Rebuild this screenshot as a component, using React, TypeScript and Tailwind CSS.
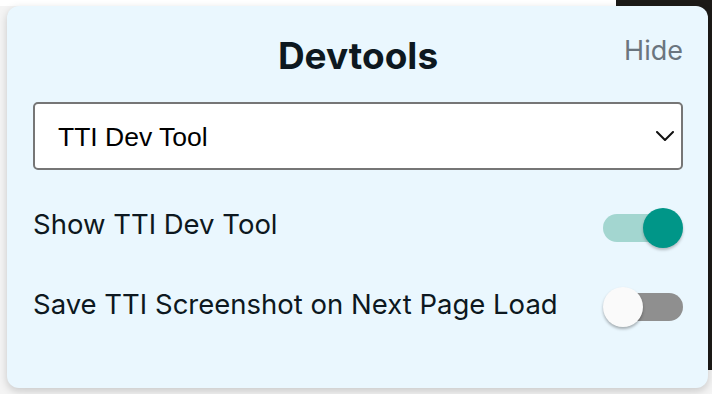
function Toggle({ on }: { on: boolean }) {
  return (
    <div className="relative h-[40px] w-[80px] shrink-0">
      <div
        className={
          on
            ? "absolute left-[0px] top-[6px] h-[28px] w-[76px] rounded-full bg-[#a3d6d0]"
            : "absolute left-[4px] top-[6px] h-[28px] w-[76px] rounded-full bg-[#8f8f8f]"
        }
      />
      <div
        className={
          on
            ? "absolute right-0 top-0 h-[40px] w-[40px] rounded-full bg-[#009688] shadow-[0_2px_3px_rgba(0,0,0,0.25)]"
            : "absolute left-0 top-0 h-[40px] w-[40px] rounded-full bg-[#fafafa] shadow-[0_2px_3px_rgba(0,0,0,0.3)]"
        }
      />
    </div>
  );
}

export default function App() {
  return (
    <div className="relative h-[394px] w-[712px] overflow-hidden bg-[#f4f4f4] font-['Inter',sans-serif]">
      <div className="absolute right-0 top-0 h-[370px] w-[96px] bg-[#1c1a17]" />
      <div className="absolute left-0 top-0 h-[6px] w-[616px] bg-white" />
      <div className="relative ml-[7px] mt-[6px] h-[382px] w-[701px] rounded-[12px] bg-[#eaf7fe] px-[26px] pr-[25px] shadow-[0_3px_8px_rgba(0,0,0,0.18)]">
        <div className="relative flex h-[96px] items-center justify-center">
          <h1 className="mt-[3px] text-[37px] font-bold text-[#0d1820]">Devtools</h1>
          <button className="absolute right-0 top-[25px] text-[27px] text-[#6b757e]">Hide</button>
        </div>
        <div className="flex h-[68px] items-center justify-between rounded-[5px] border-2 border-[#767676] bg-white pl-[23px] pr-[7px]">
          <span className="mt-[3px] font-['Liberation_Sans',sans-serif] text-[26.5px] text-black">TTI Dev Tool</span>
          <svg width="18" height="10" viewBox="0 0 18 10" fill="none" className="mr-[0px]">
            <path d="M1 1l8 8 8-8" stroke="#111" strokeWidth="2" strokeLinecap="round" strokeLinejoin="round" />
          </svg>
        </div>
        <div className="mt-[38px] flex items-center justify-between">
          <span className="-mt-[6px] text-[27.5px] text-[#0d1820]">Show TTI Dev Tool</span>
          <Toggle on />
        </div>
        <div className="mt-[39px] flex items-center justify-between">
          <span className="-mt-[5px] text-[27.5px] text-[#0d1820]">Save TTI Screenshot on Next Page Load</span>
          <Toggle on={false} />
        </div>
      </div>
    </div>
  );
}
